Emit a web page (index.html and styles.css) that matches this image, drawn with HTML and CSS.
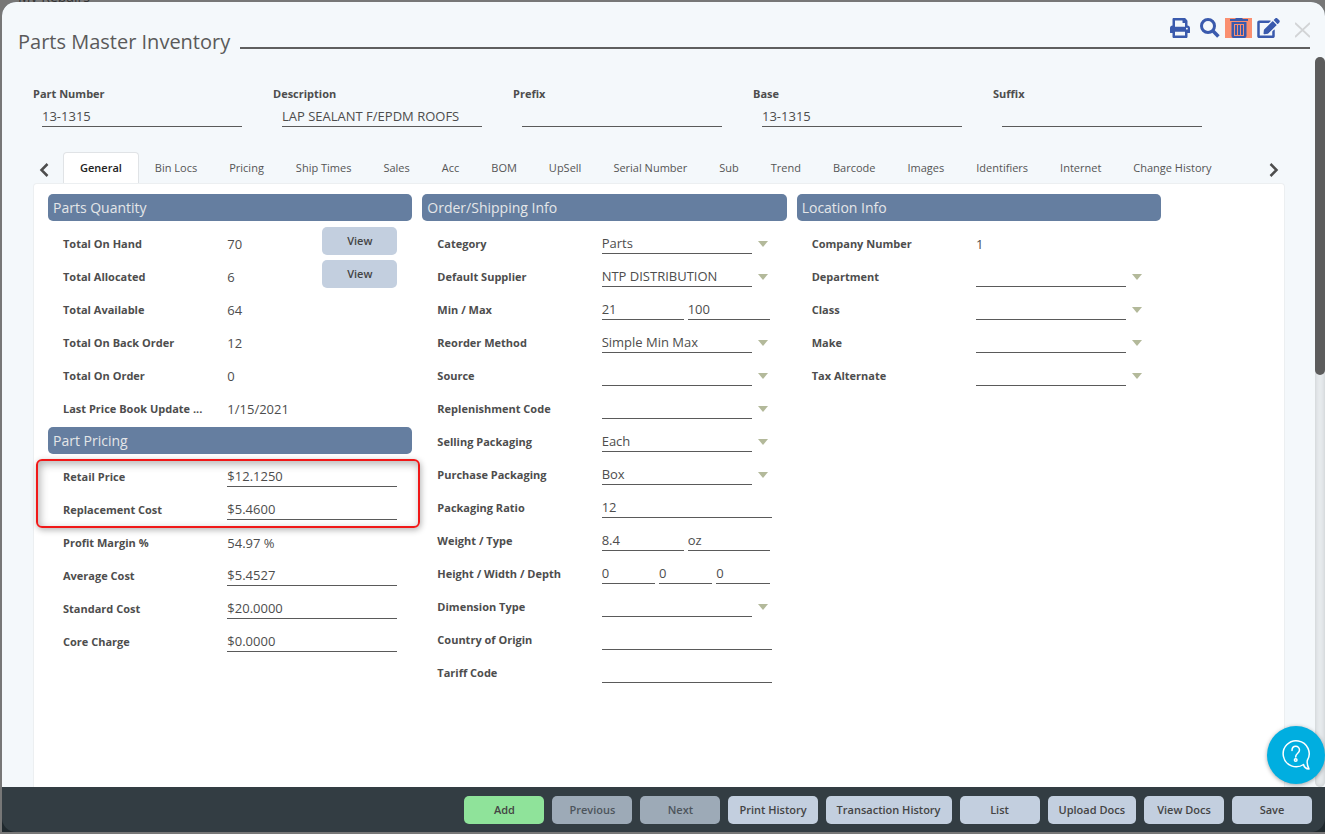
FILE: index.html
```html
<!DOCTYPE html>
<html lang="en">
<head>
    <meta charset="UTF-8">
    <meta name="viewport" content="width=device-width, initial-scale=1.0">
    <title>Parts Master Inventory</title>
    <link rel="stylesheet" href="styles.css">
</head>
<body>
    <div class="backdrop-title">My Repairs</div>

    <div class="modal">
        <header class="modal-header">
            <h1>Parts Master Inventory</h1>
            <div class="header-tools">
                <button type="button" class="icon-btn print" aria-label="Print">
                    <svg width="20" height="20" viewBox="0 0 512 512" fill="currentColor"><path d="M448 192V77.25c0-8.49-3.37-16.62-9.37-22.63L393.37 9.37c-6-6-14.14-9.37-22.63-9.37H96C78.33 0 64 14.33 64 32v160c-35.35 0-64 28.65-64 64v112c0 8.84 7.16 16 16 16h48v96c0 17.67 14.33 32 32 32h320c17.67 0 32-14.33 32-32v-96h48c8.84 0 16-7.16 16-16V256c0-35.35-28.65-64-64-64zm-64 256H128v-96h256v96zm0-224H128V64h192v48c0 8.84 7.16 16 16 16h48v96zm48 72c-13.25 0-24-10.75-24-24 0-13.26 10.75-24 24-24s24 10.74 24 24c0 13.25-10.75 24-24 24z"/></svg>
                </button>
                <button type="button" class="icon-btn" aria-label="Search">
                    <svg width="20" height="20" viewBox="0 0 20 20" fill="none" stroke="currentColor"><circle cx="8" cy="8" r="6.5" stroke-width="3"/><path d="M12.8 12.8l5.6 5.6" stroke-width="3.6"/></svg>
                </button>
                <button type="button" class="icon-btn delete" aria-label="Delete">
                    <svg width="18" height="20" viewBox="0 0 18 20" fill="currentColor"><path d="M0 1h5l1-1h6l1 1h5v2H0z"/><path fill-rule="evenodd" d="M1.500 4h15v14a2 2 0 0 1-2 2h-11a2 2 0 0 1-2-2zM4 6v12h10V6z"/><path d="M5 7h2v10H5zM8 7h2v10H8zM11 7h2v10h-2z"/></svg>
                </button>
                <button type="button" class="icon-btn" aria-label="Edit">
                    <svg width="23" height="20" viewBox="0 0 576 512" fill="currentColor"><path d="M402.6 83.2l90.2 90.2c3.8 3.8 3.8 10 0 13.8L274.4 405.6l-92.8 10.3c-12.4 1.4-22.9-9.1-21.5-21.5l10.3-92.8L388.8 83.2c3.8-3.8 10-3.8 13.8 0zm162-22.9l-48.8-48.8c-15.2-15.2-39.9-15.2-55.2 0l-35.4 35.4c-3.8 3.8-3.8 10 0 13.8l90.2 90.2c3.8 3.8 10 3.8 13.8 0l35.4-35.4c15.2-15.3 15.2-40 0-55.2zM384 346.2V448H64V128h229.8c3.2 0 6.2-1.3 8.5-3.5l40-40c7.6-7.6 2.2-20.5-8.5-20.5H48C21.5 64 0 85.5 0 112v352c0 26.5 21.5 48 48 48h352c26.5 0 48-21.5 48-48V306.2c0-10.7-12.9-16-20.5-8.5l-40 40c-2.2 2.3-3.5 5.3-3.5 8.5z"/></svg>
                </button>
                <button type="button" class="icon-btn close" aria-label="Close">
                    <svg width="15" height="16" viewBox="0 0 15 16" stroke="currentColor" stroke-width="1.8"><path d="M0 1l15 14M15 1L0 15"/></svg>
                </button>
            </div>
        </header>

        <main class="modal-body">
            <div class="content">
                <div class="part-fields">
                    <div class="part-field"><label for="part-number">Part Number</label><input type="text" id="part-number" value="13-1315"></div>
                    <div class="part-field"><label for="description">Description</label><input type="text" id="description" value="LAP SEALANT F/EPDM ROOFS"></div>
                    <div class="part-field"><label for="prefix">Prefix</label><input type="text" id="prefix"></div>
                    <div class="part-field"><label for="base">Base</label><input type="text" id="base" value="13-1315"></div>
                    <div class="part-field"><label for="suffix">Suffix</label><input type="text" id="suffix"></div>
                </div>

                <nav class="tabs">
                    <button type="button" class="tab-arrow" aria-label="Previous tabs">
                        <svg width="10" height="14" viewBox="0 0 10 14" fill="none" stroke="currentColor" stroke-width="2.5"><path d="M8.5 1L2.5 7l6 6"/></svg>
                    </button>
                    <div class="tab-list">
                        <a href="#" class="active">General</a>
                        <a href="#">Bin Locs</a>
                        <a href="#">Pricing</a>
                        <a href="#">Ship Times</a>
                        <a href="#">Sales</a>
                        <a href="#">Acc</a>
                        <a href="#">BOM</a>
                        <a href="#">UpSell</a>
                        <a href="#">Serial Number</a>
                        <a href="#">Sub</a>
                        <a href="#">Trend</a>
                        <a href="#">Barcode</a>
                        <a href="#">Images</a>
                        <a href="#">Identifiers</a>
                        <a href="#">Internet</a>
                        <a href="#">Change History</a>
                    </div>
                    <button type="button" class="tab-arrow next" aria-label="Next tabs">
                        <svg width="10" height="14" viewBox="0 0 10 14" fill="none" stroke="currentColor" stroke-width="2.5"><path d="M1.5 1l6 6-6 6"/></svg>
                    </button>
                </nav>

                <div class="panel">
                    <div class="column">
                        <section>
                            <h2>Parts Quantity</h2>
                            <div class="row"><span class="label">Total On Hand</span><span class="value">70</span><button type="button" class="btn view">View</button></div>
                            <div class="row"><span class="label">Total Allocated</span><span class="value">6</span><button type="button" class="btn view">View</button></div>
                            <div class="row"><span class="label">Total Available</span><span class="value">64</span></div>
                            <div class="row"><span class="label">Total On Back Order</span><span class="value">12</span></div>
                            <div class="row"><span class="label">Total On Order</span><span class="value">0</span></div>
                            <div class="row"><span class="label">Last Price Book Update ...</span><span class="value">1/15/2021</span></div>
                        </section>
                        <section>
                            <h2>Part Pricing</h2>
                            <div class="highlight">
                                <div class="row"><label class="label" for="retail">Retail Price</label><input type="text" id="retail" value="$12.1250"></div>
                                <div class="row"><label class="label" for="replacement">Replacement Cost</label><input type="text" id="replacement" value="$5.4600"></div>
                            </div>
                            <div class="row"><span class="label">Profit Margin %</span><span class="value">54.97 %</span></div>
                            <div class="row"><label class="label" for="average">Average Cost</label><input type="text" id="average" value="$5.4527"></div>
                            <div class="row"><label class="label" for="standard">Standard Cost</label><input type="text" id="standard" value="$20.0000"></div>
                            <div class="row"><label class="label" for="core">Core Charge</label><input type="text" id="core" value="$0.0000"></div>
                        </section>
                    </div>

                    <div class="column">
                        <section>
                            <h2>Order/Shipping Info</h2>
                            <div class="row"><label class="label" for="category">Category</label><div class="select"><select id="category"><option>Parts</option></select></div></div>
                            <div class="row"><label class="label" for="supplier">Default Supplier</label><div class="select"><select id="supplier"><option>NTP DISTRIBUTION</option></select></div></div>
                            <div class="row"><label class="label" for="min">Min / Max</label><div class="group"><input type="text" id="min" value="21"><input type="text" id="max" value="100" aria-label="Max"></div></div>
                            <div class="row"><label class="label" for="reorder">Reorder Method</label><div class="select"><select id="reorder"><option>Simple Min Max</option></select></div></div>
                            <div class="row"><label class="label" for="source">Source</label><div class="select"><select id="source"><option></option></select></div></div>
                            <div class="row"><label class="label" for="replenishment">Replenishment Code</label><div class="select"><select id="replenishment"><option></option></select></div></div>
                            <div class="row"><label class="label" for="selling">Selling Packaging</label><div class="select"><select id="selling"><option>Each</option></select></div></div>
                            <div class="row"><label class="label" for="purchase">Purchase Packaging</label><div class="select"><select id="purchase"><option>Box</option></select></div></div>
                            <div class="row"><label class="label" for="ratio">Packaging Ratio</label><input type="text" id="ratio" value="12"></div>
                            <div class="row"><label class="label" for="weight">Weight / Type</label><div class="group"><input type="text" id="weight" value="8.4"><input type="text" id="weight-type" value="oz" aria-label="Weight type"></div></div>
                            <div class="row"><label class="label" for="height">Height / Width / Depth</label><div class="group"><input type="text" id="height" value="0"><input type="text" id="width" value="0" aria-label="Width"><input type="text" id="depth" value="0" aria-label="Depth"></div></div>
                            <div class="row"><label class="label" for="dimension">Dimension Type</label><div class="select"><select id="dimension"><option></option></select></div></div>
                            <div class="row"><label class="label" for="country">Country of Origin</label><input type="text" id="country"></div>
                            <div class="row"><label class="label" for="tariff">Tariff Code</label><input type="text" id="tariff"></div>
                        </section>
                    </div>

                    <div class="column">
                        <section>
                            <h2>Location Info</h2>
                            <div class="row"><span class="label">Company Number</span><span class="value">1</span></div>
                            <div class="row"><label class="label" for="department">Department</label><div class="select"><select id="department"><option></option></select></div></div>
                            <div class="row"><label class="label" for="class">Class</label><div class="select"><select id="class"><option></option></select></div></div>
                            <div class="row"><label class="label" for="make">Make</label><div class="select"><select id="make"><option></option></select></div></div>
                            <div class="row"><label class="label" for="tax">Tax Alternate</label><div class="select"><select id="tax"><option></option></select></div></div>
                        </section>
                    </div>
                </div>
            </div>
            <div class="scrollbar"><div class="thumb"></div></div>
        </main>

        <footer class="modal-footer">
            <button type="button" class="btn add">Add</button>
            <button type="button" class="btn" disabled>Previous</button>
            <button type="button" class="btn" disabled>Next</button>
            <button type="button" class="btn">Print History</button>
            <button type="button" class="btn">Transaction History</button>
            <button type="button" class="btn">List</button>
            <button type="button" class="btn">Upload Docs</button>
            <button type="button" class="btn">View Docs</button>
            <button type="button" class="btn">Save</button>
        </footer>
    </div>

    <button type="button" class="help" aria-label="Help">
        <svg width="30" height="32" viewBox="0 0 30 32" fill="none" stroke="#fff" stroke-width="1.5" stroke-linecap="round" stroke-linejoin="round"><path d="M22.5 25.5A13 13 0 1 1 26.3 21.5C25.8 24.5 27 28 28 30C25.5 29.8 23 28 22.5 25.5z"/><path d="M11 11.5c0-5.5 7.5-5.5 7.5-.5 0 3.5-3.8 3-3.8 7"/><circle cx="14.7" cy="21" r="1.3"/></svg>
    </button>
</body>
</html>
```
FILE: styles.css
```css
* { box-sizing: border-box; }
body { margin: 0; height: 100vh; padding: 2px 0 2px 2px; background: #777; color: #4d4d4d; font-family: "Open Sans", sans-serif; font-size: 11px; overflow: hidden; }
button, input, select { font-family: inherit; color: inherit; }
button { border: none; cursor: pointer; }

.backdrop-title { position: absolute; left: 18px; top: -13px; font-size: 14px; line-height: 20px; color: #333; }

.modal { position: relative; display: flex; flex-direction: column; height: 100%; background: #20292e; border-radius: 14px 14px 0 0; overflow: hidden; }

/* header */
.modal-header { display: flex; gap: 10px; height: 55px; padding: 0 15px 8px 16px; background: #f4f8fb; }
h1 { margin: 0; padding-top: 26px; font-size: 20px; line-height: 28px; font-weight: 400; color: #5a5a5a; white-space: nowrap; }
.header-tools { flex: 1; display: flex; justify-content: flex-end; align-items: flex-start; gap: 5px; padding-top: 16px; border-bottom: 2px solid #5f5f5f; }
.icon-btn { display: flex; padding: 0; background: none; color: #3a5aad; }
.icon-btn.print { margin-right: 5px; }
.icon-btn.delete { padding: 0 4px 0 5px; background: #fa8f70; }
.icon-btn.close { margin: 4px 0 0 10px; color: #d2d4d6; }

/* body */
.modal-body { flex: 1; display: flex; min-height: 0; background: #f4f8fb; }
.content { flex: 1; display: flex; flex-direction: column; min-width: 0; padding: 27px 30px 0 31px; }
.part-fields { display: flex; margin-bottom: 25px; }
.part-field { width: 240px; }
.part-field label { display: block; font-weight: 700; line-height: 20px; }
.part-field input { width: 200px; margin: 2px 0 0 9px; }

input, select { height: 21px; padding: 0; border: none; border-bottom: 1px solid #5a5a5a; border-radius: 0; background: transparent; font-size: 13px; outline: none; }
select { appearance: none; }

.tabs { display: flex; height: 31px; }
.tab-arrow { display: flex; align-items: center; width: 30px; padding: 4px 6px 0; background: none; }
.tab-arrow.next { justify-content: flex-end; }
.tab-list { flex: 1; display: flex; }
.tab-list a { padding: 0 16px; line-height: 31px; color: #555; text-decoration: none; white-space: nowrap; }
.tab-list a.active { border: 1px solid #e0e3e6; border-bottom: none; border-radius: 4px 4px 0 0; background: #fff; color: #222; font-weight: 600; line-height: 30px; }

.panel { flex: 1; display: grid; grid-template-columns: repeat(3, 1fr); gap: 10px; padding: 10px 123px 0 14px; background: #fff; border: 1px solid #eceff1; border-bottom: none; border-radius: 4px 4px 0 0; }
h2 { margin: 0 0 6px; padding: 0 5px; border-radius: 5px; background: #657ea0; color: #e4e6e8; font-size: 14px; line-height: 27px; font-weight: 400; }
section { margin-bottom: 2px; }
.row { display: flex; align-items: center; height: 33px; padding: 0 15px; }
.label { flex: 1; font-weight: 700; white-space: nowrap; }
.value { width: 170px; font-size: 13px; }
.row input { width: 170px; }
.value:has(+ .view) { width: 95px; }
.group { display: flex; gap: 4px; width: 170px; padding-right: 2px; }
.group input { flex: 1; width: 0; }
.select { display: flex; align-items: center; gap: 6px; width: 170px; }
.select select { width: 150px; }
.select::after { content: ""; border: 5px solid transparent; border-top: 6px solid #b3b99a; border-bottom: none; }

/* callout around the two price rows */
.highlight { position: relative; }
.highlight::before { content: ""; position: absolute; inset: -1px -8px -2px -12px; border: 2px solid #f01818; border-radius: 6px; box-shadow: 1px 2px 6px rgba(0, 0, 0, .3), inset 2px 3px 8px rgba(0, 0, 0, .3); pointer-events: none; }

.scrollbar { width: 10px; border-radius: 6px; background: #e6eaec; box-shadow: inset 0 0 4px #c4c8ca; }
.thumb { height: 318px; border-radius: 6px; background: #5c5c5c; }

/* buttons */
.btn { min-width: 80px; height: 28px; padding: 0 11px 2px; border-radius: 5px; background: #c3cfdf; color: #444; font-size: 11px; font-weight: 600; }
.btn:disabled { background: #9daab7; color: #4d555c; }
.btn.add { background: #8fe39a; }
.btn.view { min-width: 75px; align-self: flex-start; }
.modal-footer { display: flex; justify-content: flex-end; gap: 8px; padding: 9px 13px 8px; border-radius: 0 0 14px 14px; background: #333d43; }

.help { position: absolute; right: 0; bottom: 50px; display: flex; align-items: center; justify-content: center; width: 58px; height: 58px; padding: 0; border-radius: 50%; background: #00aee0; box-shadow: 0 1px 4px rgba(0, 0, 0, .35); }
```
